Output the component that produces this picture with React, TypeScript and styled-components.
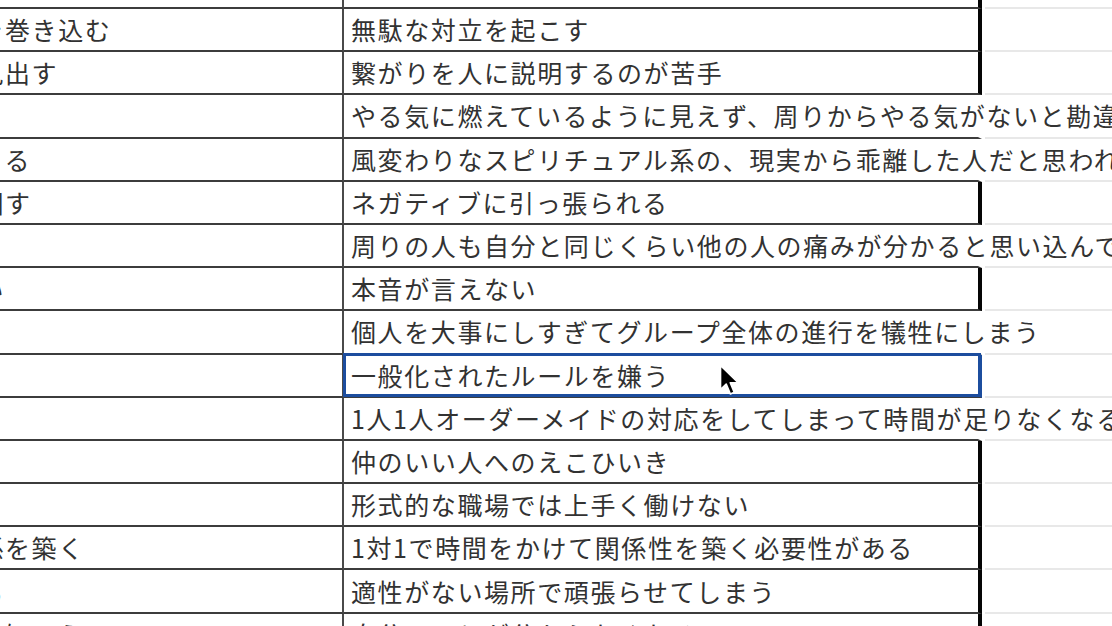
import React from "react";
import styled, { createGlobalStyle, css } from "styled-components";

const GlobalStyle = createGlobalStyle`
  html, body {
    margin: 0;
    padding: 0;
    background: #ffffff;
    overflow: hidden;
  }
  body {
    font-family: "Noto Sans CJK JP", "Noto Sans", sans-serif;
  }
`;

const Page = styled.div`
  position: relative;
  width: 1112px;
  height: 626px;
  overflow: hidden;
  background: #ffffff;
`;

const Sheet = styled.div`
  display: flex;
  flex-direction: column;
  margin-left: -160px;
`;

const Row = styled.div<{ $h: number }>`
  display: grid;
  grid-template-columns: 504px 638px 1fr;
  height: ${(p) => p.$h}px;
  flex: none;
`;

const cellText = css`
  box-sizing: border-box;
  display: flex;
  align-items: center;
  white-space: nowrap;
  font-size: 25px;
  letter-spacing: 1.6px;
  color: #323232;
  line-height: 1;
`;

const CellA = styled.div`
  ${cellText};
  overflow: hidden;
  padding-left: 5.4px;
  border-right: 2px solid #4a4a4a;
  border-bottom: 2px solid #3c3c3c;
`;

const CellB = styled.div<{ $overflow?: boolean; $selected?: boolean }>`
  ${cellText};
  position: relative;
  padding-left: 7px;
  border-bottom: 2px solid #3c3c3c;
  border-right: 4px solid ${(p) => (p.$overflow ? "transparent" : p.$selected ? "#1c4d9e" : "#050505")};
  ${(p) =>
    p.$selected &&
    css`
      &::after {
        content: "";
        position: absolute;
        top: -2px;
        left: -1px;
        right: -3px;
        bottom: -1px;
        border: 3px solid #1c4d9e;
        pointer-events: none;
      }
    `}
`;

const CellRest = styled.div`
  box-sizing: border-box;
  margin-left: 3px;
  border-bottom: 2px solid #e8e8e8;
`;

const Cursor = styled.svg`
  position: absolute;
  left: 719px;
  top: 364px;
  width: 24px;
  height: 33px;
`;

type RowData = {
  a: string;
  b: string;
  overflow?: boolean;
  selected?: boolean;
  h?: number;
};

const rows: RowData[] = [
  { a: "", b: "", h: 9 },
  { a: "周りの人々を巻き込む", b: "無駄な対立を起こす" },
  { a: "新たな道を見出す", b: "繋がりを人に説明するのが苦手" },
  {
    a: "",
    b: "やる気に燃えているように見えず、周りからやる気がないと勘違いされる",
    overflow: true,
  },
  {
    a: "居場所をつくる",
    b: "風変わりなスピリチュアル系の、現実から乖離した人だと思われる",
    overflow: true,
  },
  { a: "周りを振り回す", b: "ネガティブに引っ張られる" },
  {
    a: "",
    b: "周りの人も自分と同じくらい他の人の痛みが分かると思い込んでしまう",
    overflow: true,
  },
  { a: "感受性が強い", b: "本音が言えない" },
  { a: "", b: "個人を大事にしすぎてグループ全体の進行を犠牲にしまう", overflow: true },
  { a: "", b: "一般化されたルールを嫌う", selected: true },
  {
    a: "",
    b: "1人1人オーダーメイドの対応をしてしまって時間が足りなくなる",
    overflow: true,
  },
  { a: "", b: "仲のいい人へのえこひいき" },
  { a: "", b: "形式的な職場では上手く働けない" },
  { a: "深い信頼関係を築く", b: "1対1で時間をかけて関係性を築く必要性がある" },
  { a: "無理をさせる", b: "適性がない場所で頑張らせてしまう" },
  { a: "相手のことを知ろう", b: "自分のことが分からなくなる" },
];

export default function App() {
  return (
    <Page>
      <GlobalStyle />
      <Sheet>
        {rows.map((r, i) => (
          <Row key={i} $h={r.h ?? 43.2}>
            <CellA>{r.a}</CellA>
            <CellB $overflow={r.overflow} $selected={r.selected}>
              {r.b}
            </CellB>
            <CellRest />
          </Row>
        ))}
      </Sheet>
      <Cursor viewBox="0 0 16 22">
        <path
          d="M1 1 L1 17 L4.8 13.4 L7.6 20 L10.2 18.9 L7.5 12.5 L12.8 12.5 Z"
          fill="#000"
          stroke="#fff"
          strokeWidth="1.1"
          strokeLinejoin="round"
        />
      </Cursor>
    </Page>
  );
}
